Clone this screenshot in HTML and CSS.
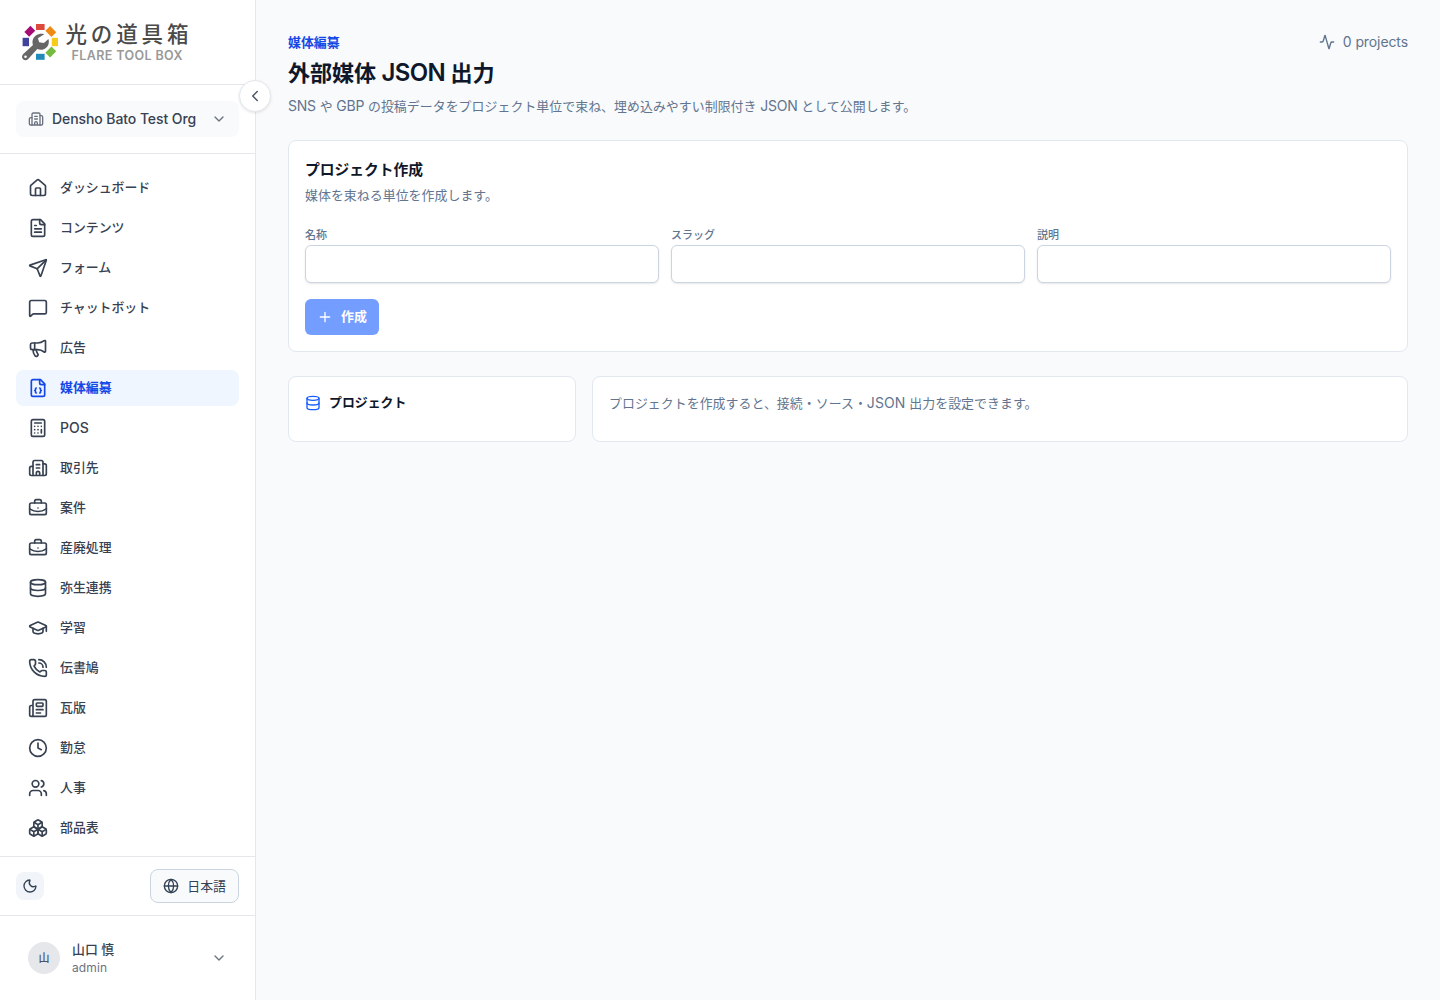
FILE: index.html
```html
<!DOCTYPE html>
<html lang="ja">
<head>
    <meta charset="UTF-8">
    <meta name="viewport" content="width=device-width, initial-scale=1.0">
    <title>外部媒体 JSON 出力</title>
    <link rel="stylesheet" href="styles.css">
</head>
<body>

<div class="layout">
    <aside class="sidebar">
        <div class="brand">
            <svg class="logo" width="170" height="44" viewBox="0 0 170 44">
                <!-- Colour ring -->
                <rect x="16" y="4" width="8.6" height="6" fill="#dc4a3d"/>
                <rect x="-4.3" y="-3.4" width="8.6" height="6.8" fill="#f08a17" transform="translate(30.8 11.5) rotate(45)"/>
                <rect x="31.8" y="17.8" width="6.2" height="8.4" fill="#f5cb1c"/>
                <rect x="-4.3" y="-3.4" width="8.6" height="6.8" fill="#75bb40" transform="translate(30.8 32) rotate(-45)"/>
                <rect x="16" y="33.8" width="8.6" height="6" fill="#228ab9"/>
                <rect x="2.6" y="17.8" width="6.4" height="8.4" fill="#41429b"/>
                <rect x="-4.3" y="-3.4" width="8.6" height="6.8" fill="#a70c74" transform="translate(9.8 11.3) rotate(-45)"/>
                <!-- Wrench -->
                <path class="wrench" d="M24.2 14.3C20 12.8 14.6 15 13 19.3c-.8 2.1-.6 4 0 5.7L3 34.2c-1.6 1.8-1.1 4.1.3 5.2 1.4 1.1 3.5 1 4.9-.5l9.1-9.8c2.1.9 4.5.9 6.5.1 4.1-1.6 6-6 4.6-10.3l-4.5 4.2-4.7-.9-1.3-4z"/>
                <circle cx="5.5" cy="36.8" r="1.3" fill="#fff"/>
                <text class="logo-name" x="45.5" y="22.3" textLength="123">光の道具箱</text>
                <text class="logo-sub" x="51.5" y="40" textLength="111">FLARE TOOL BOX</text>
            </svg>
        </div>

        <div class="org">
            <button class="org-button">
                <svg class="icon" width="16" height="16" viewBox="0 0 24 24"><path d="M10 12h4M10 8h4M14 21v-3a2 2 0 0 0-4 0v3M6 10H4a2 2 0 0 0-2 2v7a2 2 0 0 0 2 2h16a2 2 0 0 0 2-2V9a2 2 0 0 0-2-2h-2"/><path d="M6 21V5a2 2 0 0 1 2-2h8a2 2 0 0 1 2 2v16"/></svg>
                <span class="org-name">Densho Bato Test Org</span>
                <svg class="icon" width="16" height="16" viewBox="0 0 24 24"><path d="m6 9 6 6 6-6"/></svg>
            </button>
        </div>

        <nav class="nav">
            <a class="nav-item">
                <svg class="icon" width="20" height="20" viewBox="0 0 24 24"><path d="M15 21v-8a1 1 0 0 0-1-1h-4a1 1 0 0 0-1 1v8"/><path d="M3 10a2 2 0 0 1 .709-1.528l7-6a2 2 0 0 1 2.582 0l7 6A2 2 0 0 1 21 10v9a2 2 0 0 1-2 2H5a2 2 0 0 1-2-2z"/></svg>
                <span>ダッシュボード</span>
            </a>
            <a class="nav-item">
                <svg class="icon" width="20" height="20" viewBox="0 0 24 24"><path d="M15 2H6a2 2 0 0 0-2 2v16a2 2 0 0 0 2 2h12a2 2 0 0 0 2-2V7Z"/><path d="M14 2v4a2 2 0 0 0 2 2h4M10 9H8M16 13H8M16 17H8"/></svg>
                <span>コンテンツ</span>
            </a>
            <a class="nav-item">
                <svg class="icon" width="20" height="20" viewBox="0 0 24 24"><path d="M14.536 21.686a.5.5 0 0 0 .937-.024l6.5-19a.496.496 0 0 0-.635-.635l-19 6.5a.5.5 0 0 0-.024.937l7.93 3.18a2 2 0 0 1 1.112 1.11z"/><path d="m21.854 2.147-10.94 10.939"/></svg>
                <span>フォーム</span>
            </a>
            <a class="nav-item">
                <svg class="icon" width="20" height="20" viewBox="0 0 24 24"><path d="M22 17a2 2 0 0 1-2 2H6.828a2 2 0 0 0-1.414.586l-2.202 2.202A.71.71 0 0 1 2 21.286V5a2 2 0 0 1 2-2h16a2 2 0 0 1 2 2z"/></svg>
                <span>チャットボット</span>
            </a>
            <a class="nav-item">
                <svg class="icon" width="20" height="20" viewBox="0 0 24 24"><path d="M11 6a13 13 0 0 0 8.4-2.8A1 1 0 0 1 21 4v12a1 1 0 0 1-1.6.8A13 13 0 0 0 11 14H5a2 2 0 0 1-2-2V8a2 2 0 0 1 2-2z"/><path d="M6 14a12 12 0 0 0 2.4 7.2 2 2 0 0 0 3.2-2.4A8 8 0 0 1 10 14M8 6v8"/></svg>
                <span>広告</span>
            </a>
            <a class="nav-item active">
                <svg class="icon" width="20" height="20" viewBox="0 0 24 24"><path d="M15 2H6a2 2 0 0 0-2 2v16a2 2 0 0 0 2 2h12a2 2 0 0 0 2-2V7Z"/><path d="M14 2v4a2 2 0 0 0 2 2h4"/><path d="M10 12a1 1 0 0 0-1 1v1a1 1 0 0 1-1 1 1 1 0 0 1 1 1v1a1 1 0 0 0 1 1"/><path d="M14 18a1 1 0 0 0 1-1v-1a1 1 0 0 1 1-1 1 1 0 0 1-1-1v-1a1 1 0 0 0-1-1"/></svg>
                <span>媒体編纂</span>
            </a>
            <a class="nav-item">
                <svg class="icon" width="20" height="20" viewBox="0 0 24 24"><rect width="16" height="20" x="4" y="2" rx="2"/><path d="M8 6h8M16 14v4M16 10h.01M12 10h.01M8 10h.01M12 14h.01M8 14h.01M12 18h.01M8 18h.01"/></svg>
                <span class="latin">POS</span>
            </a>
            <a class="nav-item">
                <svg class="icon" width="20" height="20" viewBox="0 0 24 24"><path d="M10 12h4M10 8h4M14 21v-3a2 2 0 0 0-4 0v3M6 10H4a2 2 0 0 0-2 2v7a2 2 0 0 0 2 2h16a2 2 0 0 0 2-2V9a2 2 0 0 0-2-2h-2"/><path d="M6 21V5a2 2 0 0 1 2-2h8a2 2 0 0 1 2 2v16"/></svg>
                <span>取引先</span>
            </a>
            <a class="nav-item">
                <svg class="icon" width="20" height="20" viewBox="0 0 24 24"><path d="M12 12h.01M16 6V4a2 2 0 0 0-2-2h-4a2 2 0 0 0-2 2v2M22 13a18.15 18.15 0 0 1-20 0"/><rect width="20" height="14" x="2" y="6" rx="2"/></svg>
                <span>案件</span>
            </a>
            <a class="nav-item">
                <svg class="icon" width="20" height="20" viewBox="0 0 24 24"><path d="M12 12h.01M16 6V4a2 2 0 0 0-2-2h-4a2 2 0 0 0-2 2v2M22 13a18.15 18.15 0 0 1-20 0"/><rect width="20" height="14" x="2" y="6" rx="2"/></svg>
                <span>産廃処理</span>
            </a>
            <a class="nav-item">
                <svg class="icon" width="20" height="20" viewBox="0 0 24 24"><ellipse cx="12" cy="5" rx="9" ry="3"/><path d="M3 5v14a9 3 0 0 0 18 0V5"/><path d="M3 12a9 3 0 0 0 18 0"/></svg>
                <span>弥生連携</span>
            </a>
            <a class="nav-item">
                <svg class="icon" width="20" height="20" viewBox="0 0 24 24"><path d="M21.42 10.922a1 1 0 0 0-.019-1.838L12.83 5.18a2 2 0 0 0-1.66 0L2.6 9.08a1 1 0 0 0 0 1.832l8.57 3.908a2 2 0 0 0 1.66 0z"/><path d="M22 10v6M6 12.5V16a6 3 0 0 0 12 0v-3.5"/></svg>
                <span>学習</span>
            </a>
            <a class="nav-item">
                <svg class="icon" width="20" height="20" viewBox="0 0 24 24"><path d="M13 2a9 9 0 0 1 9 9M13 6a5 5 0 0 1 5 5"/><path d="M13.832 16.568a1 1 0 0 0 1.213-.303l.355-.465A2 2 0 0 1 17 15h3a2 2 0 0 1 2 2v3a2 2 0 0 1-2 2A18 18 0 0 1 2 4a2 2 0 0 1 2-2h3a2 2 0 0 1 2 2v3a2 2 0 0 1-.8 1.6l-.468.351a1 1 0 0 0-.292 1.233 14 14 0 0 0 6.392 6.384"/></svg>
                <span>伝書鳩</span>
            </a>
            <a class="nav-item">
                <svg class="icon" width="20" height="20" viewBox="0 0 24 24"><path d="M15 18h-5M18 14h-8M4 22h16a2 2 0 0 0 2-2V4a2 2 0 0 0-2-2H8a2 2 0 0 0-2 2v16a2 2 0 0 1-4 0v-9a2 2 0 0 1 2-2h2"/><rect width="8" height="4" x="10" y="6" rx="1"/></svg>
                <span>瓦版</span>
            </a>
            <a class="nav-item">
                <svg class="icon" width="20" height="20" viewBox="0 0 24 24"><circle cx="12" cy="12" r="10"/><path d="M12 6v6l4 2"/></svg>
                <span>勤怠</span>
            </a>
            <a class="nav-item">
                <svg class="icon" width="20" height="20" viewBox="0 0 24 24"><path d="M16 21v-2a4 4 0 0 0-4-4H6a4 4 0 0 0-4 4v2M16 3.128a4 4 0 0 1 0 7.744M22 21v-2a4 4 0 0 0-3-3.87"/><circle cx="9" cy="7" r="4"/></svg>
                <span>人事</span>
            </a>
            <a class="nav-item">
                <svg class="icon" width="20" height="20" viewBox="0 0 24 24"><path d="M2.97 12.92A2 2 0 0 0 2 14.63v3.24a2 2 0 0 0 .97 1.71l3 1.8a2 2 0 0 0 2.06 0L12 19v-5.5l-5-3-4.03 2.42Z"/><path d="m7 16.5-4.74-2.85M7 16.5l5-3M7 16.5v5.17"/><path d="M12 13.5V19l3.97 2.38a2 2 0 0 0 2.06 0l3-1.8a2 2 0 0 0 .97-1.71v-3.24a2 2 0 0 0-.97-1.71L17 10.5l-5 3Z"/><path d="m17 16.5-5-3M17 16.5l4.74-2.85M17 16.5v5.17"/><path d="M7.97 4.42A2 2 0 0 0 7 6.13v4.37l5 3 5-3V6.13a2 2 0 0 0-.97-1.71l-3-1.8a2 2 0 0 0-2.06 0l-3 1.8Z"/><path d="M12 8 7.26 5.15M12 8l4.74-2.85M12 13.5V8"/></svg>
                <span>部品表</span>
            </a>
        </nav>

        <div class="tools">
            <button class="theme-button" aria-label="テーマ">
                <svg class="icon" width="16" height="16" viewBox="0 0 24 24"><path d="M20.985 12.486a9 9 0 1 1-9.473-9.472c.405-.022.617.46.402.803a6 6 0 0 0 8.268 8.268c.344-.215.825-.004.803.401"/></svg>
            </button>
            <button class="lang-button">
                <svg class="icon" width="16" height="16" viewBox="0 0 24 24"><circle cx="12" cy="12" r="10"/><path d="M12 2a14.5 14.5 0 0 0 0 20 14.5 14.5 0 0 0 0-20M2 12h20"/></svg>
                <span>日本語</span>
            </button>
        </div>

        <div class="user">
            <span class="avatar">山</span>
            <div class="user-info">
                <p class="user-name">山口 慎</p>
                <p class="user-role">admin</p>
            </div>
            <svg class="icon" width="16" height="16" viewBox="0 0 24 24"><path d="m6 9 6 6 6-6"/></svg>
        </div>

        <button class="collapse-button" aria-label="閉じる">
            <svg class="icon" width="18" height="18" viewBox="0 0 24 24"><path d="m15 18-6-6 6-6"/></svg>
        </button>
    </aside>

    <main class="main">
        <header class="page-header">
            <div>
                <p class="eyebrow">媒体編纂</p>
                <h1>外部媒体 <span class="latin">JSON</span> 出力</h1>
                <p class="lead"><span class="latin">SNS </span>や<span class="latin"> GBP </span>の投稿データをプロジェクト単位で束ね、埋め込みやすい制限付き<span class="latin"> JSON </span>として公開します。</p>
            </div>
            <div class="count">
                <svg class="icon" width="16" height="16" viewBox="0 0 24 24"><path d="M22 12h-2.48a2 2 0 0 0-1.93 1.46l-2.35 8.36a.25.25 0 0 1-.48 0L9.24 2.18a.25.25 0 0 0-.48 0l-2.35 8.36A2 2 0 0 1 4.49 12H2"/></svg>
                <span>0 projects</span>
            </div>
        </header>

        <section class="card create-card">
            <h2>プロジェクト作成</h2>
            <p class="card-text">媒体を束ねる単位を作成します。</p>
            <div class="form-row">
                <div class="form-group">
                    <label for="name">名称</label>
                    <input type="text" id="name">
                </div>
                <div class="form-group">
                    <label for="slug">スラッグ</label>
                    <input type="text" id="slug">
                </div>
                <div class="form-group">
                    <label for="description">説明</label>
                    <input type="text" id="description">
                </div>
            </div>
            <button class="create-button" disabled>
                <svg class="icon" width="16" height="16" viewBox="0 0 24 24"><path d="M5 12h14M12 5v14"/></svg>
                <span>作成</span>
            </button>
        </section>

        <div class="panels">
            <section class="card panel">
                <h3>
                    <svg class="icon" width="16" height="16" viewBox="0 0 24 24"><ellipse cx="12" cy="5" rx="9" ry="3"/><path d="M3 5v14a9 3 0 0 0 18 0V5"/><path d="M3 12a9 3 0 0 0 18 0"/></svg>
                    <span>プロジェクト</span>
                </h3>
            </section>
            <section class="card panel">
                <p class="panel-text">プロジェクトを作成すると、接続・ソース・<span class="latin">JSON </span>出力を設定できます。</p>
            </section>
        </div>
    </main>
</div>

</body>
</html>
```
FILE: styles.css
```css
/* General styles */
* {
    box-sizing: border-box;
    margin: 0;
    padding: 0;
}
body {
    font-family: Inter, "Noto Sans CJK JP", sans-serif;
    font-size: 12.9px;
    line-height: 20px;
    background-color: #f8fafc;
    color: #0f172a;
}
button {
    font: inherit;
    color: inherit;
    border: none;
    background: none;
}
.icon {
    display: block;
    flex-shrink: 0;
    fill: none;
    stroke: currentColor;
    stroke-width: 2;
    stroke-linecap: round;
    stroke-linejoin: round;
}
/* Latin letters run slightly larger than the kana and kanji */
.latin {
    font-size: 1.085em;
    line-height: 1;
}
.layout {
    display: flex;
    height: 100vh;
}

/* Sidebar */
.sidebar {
    position: relative;
    display: flex;
    flex-direction: column;
    width: 256px;
    flex-shrink: 0;
    background: #fff;
    border-right: 1px solid #e5e7eb;
}
.brand {
    height: 85px;
    padding: 20px;
    border-bottom: 1px solid #e5e7eb;
}
.logo {
    display: block;
    overflow: visible;
}
.wrench {
    fill: #666;
    stroke: #fff;
    stroke-width: 1;
    paint-order: stroke;
}
.logo-name {
    font-size: 21.5px;
    font-weight: 500;
    fill: #4a4a4a;
}
.logo-sub {
    font-size: 12.5px;
    font-weight: 600;
    fill: #999;
}
.org {
    padding: 16px;
    border-bottom: 1px solid #e5e7eb;
}
.org-button {
    display: flex;
    align-items: center;
    gap: 8px;
    width: 100%;
    height: 36px;
    padding: 0 12px;
    border-radius: 8px;
    background: #f9fafb;
    color: #6b7280;
}
.org-name {
    flex: 1;
    font-size: 14px;
    font-weight: 500;
    letter-spacing: -0.08px;
    text-align: left;
    white-space: nowrap;
    color: #374151;
}
.nav {
    flex: 1;
    min-height: 0;
    display: flex;
    flex-direction: column;
    gap: 4px;
    padding: 16px;
    overflow: hidden;
}
.nav-item {
    display: flex;
    align-items: center;
    gap: 12px;
    height: 36px;
    flex-shrink: 0;
    padding: 0 12px;
    border-radius: 8px;
    font-weight: 500;
    color: #374151;
}
.nav-item.active {
    background: #eff6ff;
    color: #1447e6;
    font-weight: 700;
}
.tools {
    display: flex;
    align-items: center;
    justify-content: space-between;
    height: 59px;
    padding: 0 16px;
    border-top: 1px solid #e5e7eb;
}
.theme-button {
    display: flex;
    align-items: center;
    justify-content: center;
    width: 28px;
    height: 28px;
    border-radius: 8px;
    background: #f1f5f9;
    color: #334155;
}
.lang-button {
    display: flex;
    align-items: center;
    gap: 8px;
    height: 34px;
    padding: 0 12px;
    border: 1px solid #cbd5e1;
    border-radius: 8px;
    background: #f8fafc;
    color: #334155;
}
.lang-button span {
    padding-top: 1px;
}
.user {
    display: flex;
    align-items: center;
    gap: 12px;
    height: 85px;
    padding: 0 28px;
    border-top: 1px solid #e5e7eb;
    color: #6b7280;
}
.avatar {
    display: flex;
    align-items: center;
    justify-content: center;
    width: 32px;
    height: 32px;
    border-radius: 50%;
    background: #e5e7eb;
    color: #4b5563;
    font-size: 11px;
    font-weight: 500;
}
.user-info {
    flex: 1;
}
.user-name {
    line-height: 18px;
    font-weight: 500;
    color: #374151;
}
.user-role {
    padding-top: 1px;
    font-size: 12px;
    line-height: 16px;
    letter-spacing: 0.1px;
}
/* Sits on the sidebar edge */
.collapse-button {
    position: absolute;
    top: 80px;
    right: -16px;
    display: flex;
    align-items: center;
    justify-content: center;
    width: 32px;
    height: 32px;
    border: 1px solid #e5e7eb;
    border-radius: 50%;
    background: #fff;
    color: #4b5563;
    box-shadow: 0 1px 3px rgba(0, 0, 0, 0.1);
}

/* Main column */
.main {
    flex: 1;
    padding: 32px;
}
.page-header {
    display: flex;
    justify-content: space-between;
    align-items: flex-start;
    margin-bottom: 23px;
}
.eyebrow {
    padding-top: 1px;
    line-height: 19px;
    font-weight: 700;
    color: #1447e6;
}
h1 {
    margin: 5px 0 8px;
    font-size: 22.1px;
    line-height: 32px;
    font-weight: 600;
    letter-spacing: -0.1px;
}
h1 .latin {
    letter-spacing: -0.6px;
}
.lead,
.card-text,
.panel-text {
    letter-spacing: 0.06px;
    color: #62748e;
}
.lead .latin {
    letter-spacing: -0.2px;
}
.count {
    display: flex;
    align-items: center;
    gap: 8px;
    font-size: 14px;
    letter-spacing: -0.1px;
    color: #62748e;
}
.card {
    padding: 16px;
    background: #fff;
    border: 1px solid #e2e8f0;
    border-radius: 8px;
}
.create-card {
    padding-top: 17px;
    margin-bottom: 24px;
}
h2 {
    margin-bottom: 4px;
    font-size: 14.75px;
    line-height: 24px;
    font-weight: 600;
}
.form-row {
    display: grid;
    grid-template-columns: repeat(3, 1fr);
    gap: 12px;
    margin: 19px 0 16px;
}
label {
    display: block;
    font-size: 11px;
    font-weight: 500;
    color: #62748e;
}
input {
    display: block;
    width: 100%;
    height: 38px;
    padding: 8px 12px;
    border: 1px solid #cbd5e1;
    border-radius: 6px;
    background: #fff;
    font: inherit;
    box-shadow: 0 1px 2px rgba(0, 0, 0, 0.1);
}
.create-button {
    display: flex;
    align-items: center;
    gap: 8px;
    height: 36px;
    padding: 0 12px;
    border-radius: 6px;
    background: #739eff;
    color: #fff;
    font-weight: 700;
}
.panels {
    display: grid;
    grid-template-columns: 288px 1fr;
    gap: 16px;
}
.panel {
    height: 66px;
}
.panel-text {
    padding-top: 1px;
}
h3 {
    display: flex;
    align-items: center;
    gap: 8px;
    font-size: 12.9px;
    font-weight: 600;
}
h3 .icon {
    color: #155dfc;
}
```
